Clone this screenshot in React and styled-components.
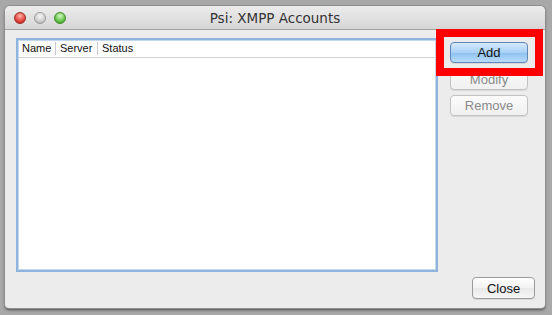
import React from "react";
import styled, { createGlobalStyle } from "styled-components";

const Global = createGlobalStyle`
  html, body { margin: 0; padding: 0; }
  body {
    background: #a8a8a8;
    font-family: "Liberation Sans", Arial, sans-serif;
    width: 552px;
    height: 315px;
    overflow: hidden;
  }
`;

const Window = styled.div`
  margin: 6px 7px 0 5px;
  width: 540px;
  height: 302px;
  background: #ececec;
  border-radius: 5px 5px 4px 4px;
  box-shadow: 0 0 0 1px #8e8e8e, 0 2px 3px rgba(0, 0, 0, 0.55);
  display: flex;
  flex-direction: column;
  overflow: hidden;
`;

const TitleBar = styled.div`
  height: 23px;
  flex: none;
  position: relative;
  display: flex;
  align-items: center;
  justify-content: center;
  background: linear-gradient(#ececec, #d6d6d6);
  border-bottom: 1px solid #a2a2a2;
`;

const Lights = styled.div`
  position: absolute;
  left: 9px;
  top: 6px;
  display: flex;
  gap: 8px;
`;

const Light = styled.span`
  width: 12px;
  height: 12px;
  border-radius: 50%;
  box-sizing: border-box;
  border: 1px solid ${(p) => p.$edge};
  background: radial-gradient(circle at 50% 30%, ${(p) => p.$hi} 0%, ${(p) => p.$c} 60%, ${(p) => p.$lo} 100%);
`;

const Title = styled.div`
  font-family: "DejaVu Sans", "Liberation Sans", sans-serif;
  font-size: 13.5px;
  color: #333333;
  margin-top: 1px;
`;

const Body = styled.div`
  flex: 1;
  display: flex;
  padding: 8px 10px 9px 11px;
  min-height: 0;
`;

const ListBox = styled.div`
  width: 422px;
  height: 234px;
  box-sizing: border-box;
  border: 2px solid #8fb4de;
  box-shadow: inset 0 0 0 1px #c3d7ee;
  background: #ffffff;
  flex: none;
`;

const Header = styled.div`
  display: flex;
  height: 17px;
  border-bottom: 1px solid #cfcfcf;
  align-items: center;
`;

const Col = styled.div`
  font-size: 11px;
  color: #111;
  padding: 0 4px;
  height: 13px;
  line-height: 13px;
  width: ${(p) => p.$w}px;
  border-right: ${(p) => (p.$last ? "none" : "1px solid #c9c9c9")};
`;

const Side = styled.div`
  flex: 1;
  margin-left: 12px;
  display: flex;
  flex-direction: column;
`;

const TopButtons = styled.div`
  margin-top: 4px;
  display: flex;
  flex-direction: column;
  gap: 5px;
`;

const Button = styled.button`
  width: ${(p) => p.$w || 78}px;
  height: 21px;
  box-sizing: border-box;
  padding: 0;
  font-family: "Liberation Sans", Arial, sans-serif;
  font-size: 13px;
  color: ${(p) => (p.$disabled ? "#8a8a8a" : "#111")};
  border-radius: 4px;
  border: 1px solid ${(p) => (p.$primary ? "#5f86b8" : p.$disabled ? "#c2c2c2" : "#9a9a9a")};
  background: ${(p) =>
    p.$primary
      ? "linear-gradient(#d6eafd 0%, #a9d0f5 50%, #8cc0f0 51%, #b9dcf9 100%)"
      : p.$disabled
      ? "linear-gradient(#fbfbfb, #f0f0f0)"
      : "linear-gradient(#ffffff, #f2f2f2 50%, #e8e8e8 51%, #f6f6f6)"};
  box-shadow: 0 1px 0 rgba(0, 0, 0, 0.08);
  flex: none;
`;

const Highlight = styled.div`
  position: relative;
  width: 78px;
  height: 22px;
`;

const RedFrame = styled.div`
  position: absolute;
  left: -14px;
  top: -13px;
  width: 107px;
  height: 47px;
  box-sizing: border-box;
  border: 8px solid #ff0000;
  pointer-events: none;
`;

const CloseButton = styled(Button)`
  margin-top: auto;
  align-self: flex-end;
  height: 22px;
`;

export default function App() {
  return (
    <>
      <Global />
      <Window>
        <TitleBar>
          <Lights>
            <Light $c="#e2453c" $hi="#ffb3ad" $lo="#a9201a" $edge="#9c2a25" />
            <Light $c="#cfcfcf" $hi="#f6f6f6" $lo="#a5a5a5" $edge="#9a9a9a" />
            <Light $c="#66c548" $hi="#d3f6c4" $lo="#2e8a1c" $edge="#3c8a2c" />
          </Lights>
          <Title>Psi: XMPP Accounts</Title>
        </TitleBar>
        <Body>
          <ListBox>
            <Header>
              <Col $w={29}>Name</Col>
              <Col $w={33}>Server</Col>
              <Col $w={60} $last>Status</Col>
            </Header>
          </ListBox>
          <Side>
            <TopButtons>
              <Highlight>
                <Button $primary>Add</Button>
                <RedFrame />
              </Highlight>
              <Button $disabled>Modify</Button>
              <Button $disabled>Remove</Button>
            </TopButtons>
            <CloseButton $w={63}>Close</CloseButton>
          </Side>
        </Body>
      </Window>
    </>
  );
}
